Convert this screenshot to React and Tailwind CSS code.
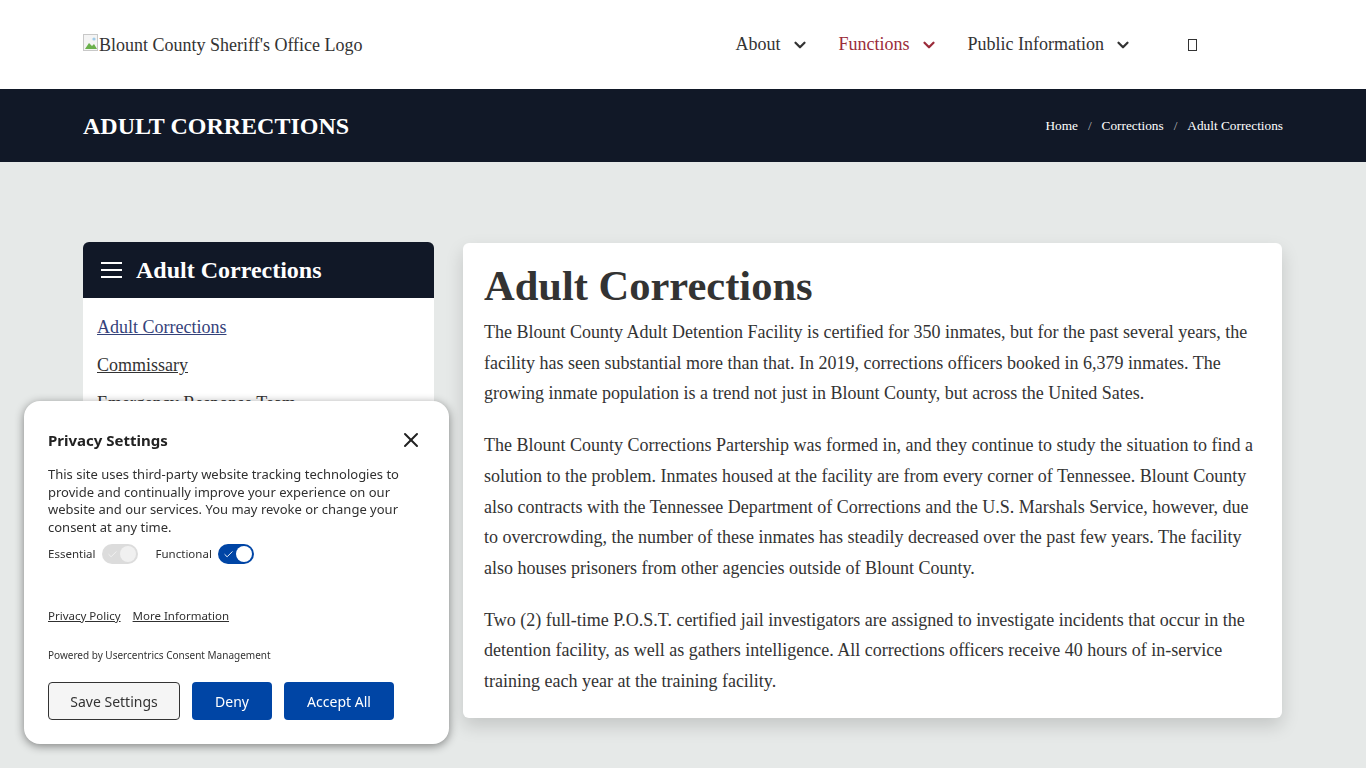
import React from "react";
import { ChevronDown, X, Check } from "lucide-react";

const serif = { fontFamily: '"Liberation Serif", "Times New Roman", serif' };
const sans = { fontFamily: '"Noto Sans", "Open Sans", sans-serif' };

const BrokenImage = () => (
    <svg width="16" height="18" viewBox="0 0 16 18" className="shrink-0 mb-[2px]">
        <rect x="0.5" y="0.5" width="14" height="16" fill="#f4f4f4" stroke="#c8c8c8" />
        <path d="M2 15 L6 9 L9 12 L11 10 L14 15 Z" fill="#6ab04c" />
        <circle cx="11" cy="5" r="1.6" fill="#9ecbe8" />
    </svg>
);

const NavItem = ({ label, active }) => (
    <div className={`flex items-center gap-[10px] ${active ? "text-[#9b2c3a]" : "text-[#333]"}`}>
        <span className="text-[18px]">{label}</span>
        <ChevronDown size={18} strokeWidth={3} />
    </div>
);

const Toggle = ({ on }) => (
    <div className={`relative w-[36px] h-[20px] rounded-full flex items-center ${on ? "bg-[#0045a5]" : "bg-[#dcdcdc]"}`}>
        <Check size={11} strokeWidth={2} className={`absolute left-[5px] ${on ? "text-white" : "text-[#f2f2f2]"}`} />
        <div className={`absolute right-[2px] w-[16px] h-[16px] rounded-full ${on ? "bg-white" : "bg-[#f0f0f0]"}`} />
    </div>
);

const ConsentBanner = () => (
    <div style={sans} className="fixed left-[24px] top-[401px] w-[425px] h-[343px] bg-white rounded-[16px] shadow-[0_2px_10px_rgba(0,0,0,0.45)] px-[24px] pt-[27px] text-[#303030]">
        <div className="flex items-center justify-between">
            <h2 className="text-[15px] font-bold text-[#222]">Privacy Settings</h2>
            <X size={24} strokeWidth={2} className="text-[#222] mr-[2px]" />
        </div>
        <p className="mt-[14px] text-[13px] leading-[17.5px] pr-[10px]">
            This site uses third-party website tracking technologies to provide and continually improve your experience on our website and our services. You may revoke or change your consent at any time.
        </p>
        <div className="mt-[8px] flex items-center text-[11.5px]">
            <span>Essential</span>
            <div className="ml-[6px]"><Toggle /></div>
            <span className="ml-[18px]">Functional</span>
            <div className="ml-[6px]"><Toggle on /></div>
        </div>
        <div className="mt-[43px] flex gap-[12px] text-[11.5px] underline">
            <span>Privacy Policy</span>
            <span>More Information</span>
        </div>
        <div className="mt-[24px] text-[10px] text-[#333]">Powered by Usercentrics Consent Management</div>
        <div className="mt-[19px] flex gap-[12px] text-[14px]">
            <button className="w-[132px] h-[38px] rounded-[4px] border border-[#333] bg-[#f5f5f5] text-[#333]">Save Settings</button>
            <button className="w-[80px] h-[38px] rounded-[4px] bg-[#0045a5] text-white">Deny</button>
            <button className="w-[110px] h-[38px] rounded-[4px] bg-[#0045a5] text-white">Accept All</button>
        </div>
    </div>
);

export default function App() {
    return (
        <div style={serif} className="min-h-screen bg-[#e6e9e8]">
            {/* header */}
            <header className="h-[89px] bg-white flex items-center justify-between pl-[83px] pr-[169px]">
                <div className="flex items-end text-[18px] text-[#333] -mt-[2px]">
                    <BrokenImage />
                    <span className="leading-none">Blount County Sheriff's Office Logo</span>
                </div>
                <nav className="flex items-center gap-[30px]">
                    <NavItem label="About" />
                    <NavItem label="Functions" active />
                    <NavItem label="Public Information" />
                    <span className="ml-[26px] inline-block w-[9px] h-[12px] border border-[#333]" />
                </nav>
            </header>

            {/* title bar */}
            <div className="h-[73px] bg-[#111827] flex items-center justify-between px-[83px] text-white">
                <h1 className="text-[24px] font-bold">ADULT CORRECTIONS</h1>
                <div className="flex items-center gap-[10px] text-[13.3px]">
                    <span>Home</span>
                    <span className="text-[#bbb]">/</span>
                    <span>Corrections</span>
                    <span className="text-[#bbb]">/</span>
                    <span>Adult Corrections</span>
                </div>
            </div>

            {/* main */}
            <main className="flex gap-[29px] px-[83px] pt-[80px] pb-[60px]">
                <aside className="w-[351px] shrink-0 self-start">
                    <div className="h-[56px] bg-[#111827] rounded-t-[6px] flex items-center gap-[14px] px-[18px] text-white">
                        <svg width="21" height="18" viewBox="0 0 21 18">
                            <path d="M0 2h21M0 9h21M0 16h21" stroke="white" strokeWidth="2" />
                        </svg>
                        <span className="text-[24px] font-bold">Adult Corrections</span>
                    </div>
                    <ul className="bg-white px-[14px] pt-[18px] pb-[20px] text-[18px] space-y-[15px]">
                        <li className="underline text-[#34427a] leading-[23px]">Adult Corrections</li>
                        <li className="underline text-[#333] leading-[23px]">Commissary</li>
                        <li className="underline text-[#333] leading-[23px]">Emergency Response Team</li>
                        <li className="underline text-[#333] leading-[23px]">Inmate Information</li>
                    </ul>
                </aside>

                <section className="w-[819px] bg-white rounded-[6px] shadow-[0_8px_18px_rgba(0,0,0,0.15)] px-[21px] pt-[20px] pb-[21px] text-[#333] mt-[1px]">
                    <h2 className="text-[42.5px] font-bold leading-[46px] text-[#333]">Adult Corrections</h2>
                    <div className="mt-[8px] text-[18px] leading-[30.7px] space-y-[21px]">
                        <p>The Blount County Adult Detention Facility is certified for 350 inmates, but for the past several years, the facility has seen substantial more than that. In 2019, corrections officers booked in 6,379 inmates. The growing inmate population is a trend not just in Blount County, but across the United Sates.</p>
                        <p>The Blount County Corrections Partership was formed in, and they continue to study the situation to find a solution to the problem. Inmates housed at the facility are from every corner of Tennessee. Blount County also contracts with the Tennessee Department of Corrections and the U.S. Marshals Service, however, due to overcrowding, the number of these inmates has steadily decreased over the past few years. The facility also houses prisoners from other agencies outside of Blount County.</p>
                        <p>Two (2) full-time P.O.S.T. certified jail investigators are assigned to investigate incidents that occur in the detention facility, as well as gathers intelligence. All corrections officers receive 40 hours of in-service training each year at the training facility.</p>
                    </div>
                </section>
            </main>

            <ConsentBanner />
        </div>
    );
}
